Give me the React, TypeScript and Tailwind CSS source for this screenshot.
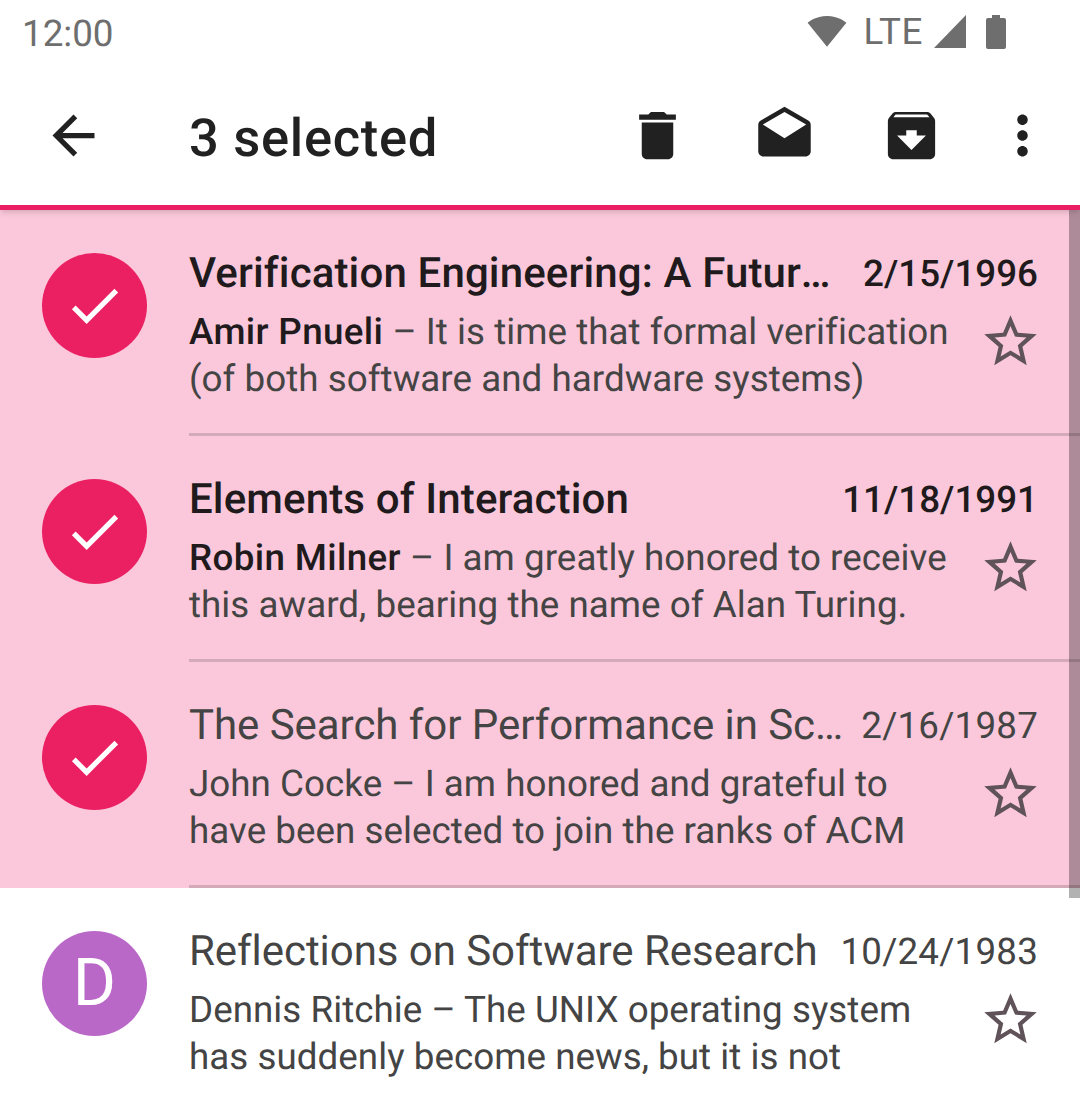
const rows = [
  {
    subject: "Verification Engineering: A Future Research Agenda",
    date: "2/15/1996",
    sender: "Amir Pnueli",
    snippet: "It is time that formal verification (of both software and hardware systems)",
    selected: true,
    unread: true,
  },
  {
    subject: "Elements of Interaction",
    date: "11/18/1991",
    sender: "Robin Milner",
    snippet: "I am greatly honored to receive this award, bearing the name of Alan Turing.",
    selected: true,
    unread: true,
  },
  {
    subject: "The Search for Performance in Scientific Computing",
    date: "2/16/1987",
    sender: "John Cocke",
    snippet: "I am honored and grateful to have been selected to join the ranks of ACM",
    selected: true,
    unread: false,
  },
  {
    subject: "Reflections on Software Research",
    date: "10/24/1983",
    sender: "Dennis Ritchie",
    snippet: "The UNIX operating system has suddenly become news, but it is not",
    selected: false,
    unread: false,
  },
];

function Icon({ d, className }: { d: string; className: string }) {
  return (
    <svg viewBox="0 0 24 24" className={className} fill="currentColor">
      <path d={d} />
    </svg>
  );
}

function StatusBar() {
  return (
    <div className="flex h-[63px] items-center justify-between pl-[22px] pr-[74px] text-[#6e6e6e]">
      <span className="mt-[5px] text-[36.75px] leading-none">12:00</span>
      <div className="flex items-center">
        <svg viewBox="0 0 24 24" className="-mt-[2px] h-[40px] w-[40px]" fill="currentColor">
          <path d="M12.01 21.49L23.64 7c-.45-.34-4.93-4-11.64-4C5.28 3 .81 6.66.36 7l11.64 14.5.01-.01z" />
        </svg>
        <span className="ml-[17px] mt-[1px] text-[36.75px] leading-none tracking-[0.6px]">LTE</span>
        <svg viewBox="0 0 32 33" className="ml-[11px] h-[33px] w-[32px]" fill="currentColor">
          <path d="M32 0V33H0z" />
        </svg>
        <svg viewBox="0 0 20 34" className="ml-[20px] h-[34px] w-[20px]" fill="currentColor">
          <path d="M6 0h8v3h4a2 2 0 0 1 2 2v27a2 2 0 0 1-2 2H2a2 2 0 0 1-2-2V5a2 2 0 0 1 2-2h4z" />
        </svg>
      </div>
    </div>
  );
}

function Toolbar() {
  return (
    <div className="relative z-10 flex h-[147px] items-center border-b-[5px] border-[#e91e63] bg-white text-[#212121] shadow-md">
      <Icon
        d="M20 11H7.83l5.59-5.59L12 4l-8 8 8 8 1.41-1.41L7.83 13H20v-2z"
        className="ml-[42px] mt-[3px] h-[63px] w-[63px]"
      />
      <span className="ml-[84px] mt-[8px] flex-1 text-[52.5px] font-medium leading-none tracking-[0.7px]">
        3 selected
      </span>
      <Icon
        d="M6 19c0 1.1.9 2 2 2h8c1.1 0 2-.9 2-2V7H6v12zM19 4h-3.5l-1-1h-5l-1 1H5v2h14V4z"
        className="mt-[3px] h-[63px] w-[63px]"
      />
      <Icon
        d="M21.99 8c0-.72-.37-1.35-.94-1.7L12 1 2.95 6.3C2.38 6.65 2 7.28 2 8v10c0 1.1.9 2 2 2h16c1.1 0 2-.9 2-2l-.01-10zM12 13L3.74 7.84 12 3l8.26 4.84L12 13z"
        className="ml-[64px] mt-[3px] h-[63px] w-[63px]"
      />
      <Icon
        d="M20.54 5.23l-1.39-1.68C18.88 3.21 18.47 3 18 3H6c-.47 0-.88.21-1.16.55L3.46 5.23C3.17 5.57 3 6.02 3 6.5V19c0 1.1.9 2 2 2h14c1.1 0 2-.9 2-2V6.5c0-.48-.17-.93-.46-1.27zM12 17.5L6.5 12H10v-2h4v2h3.5L12 17.5zM5.12 5l.81-1h12l.94 1H5.12z"
        className="ml-[64px] mt-[3px] h-[63px] w-[63px]"
      />
      <Icon
        d="M12 8c1.1 0 2-.9 2-2s-.9-2-2-2-2 .9-2 2 .9 2 2 2zm0 2c-1.1 0-2 .9-2 2s.9 2 2 2 2-.9 2-2-.9-2-2-2zm0 6c-1.1 0-2 .9-2 2s.9 2 2 2 2-.9 2-2-.9-2-2-2z"
        className="ml-[48px] mr-[26px] mt-[3px] h-[63px] w-[63px]"
      />
    </div>
  );
}

function Row({ row }: { row: (typeof rows)[number] }) {
  const strong = "font-medium text-[#201a1d]";
  return (
    <div className={`flex h-[226px] pl-[42px] ${row.selected ? "bg-[#fac8da]" : "bg-white"}`}>
      <div
        className={`mt-[43px] flex h-[105px] w-[105px] shrink-0 items-center justify-center rounded-full text-white ${
          row.selected ? "bg-[#ea2063]" : "bg-[#ba68c8]"
        }`}
      >
        {row.selected ? (
          <Icon d="M9 16.2L4.8 12l-1.4 1.4L9 19 21 7l-1.4-1.4L9 16.2z" className="h-[63px] w-[63px]" />
        ) : (
          <span className="text-[66px] leading-none">D</span>
        )}
      </div>
      <div className="ml-[42px] min-w-0 flex-1 border-b-[3px] border-black/15 pr-[42px] pt-[37px]">
        <div className="flex h-[52px] items-center gap-[18px]">
          <span
            className={`min-w-0 flex-1 truncate text-[42px] ${
              row.unread ? `${strong} tracking-[0.14px]` : "tracking-[-0.05px] text-[#444444]"
            }`}
          >
            {row.subject}
          </span>
          <span
            className={`mt-[1px] shrink-0 text-[36.75px] ${row.unread ? strong : "tracking-[0.2px] text-[#444444]"}`}
          >
            {row.date}
          </span>
        </div>
        <div className="mt-[9px] flex">
          <p className="w-[772px] text-[36.75px] leading-[47px] tracking-[0.04px] text-[#444444]">
            <span className={row.unread ? `${strong} tracking-[0.36px]` : ""}>{row.sender}</span> – {row.snippet}
          </p>
          <Icon
            d="M22 9.24l-7.19-.62L12 2 9.19 8.63 2 9.24l5.46 4.73L5.82 21 12 17.27 18.18 21l-1.63-7.03L22 9.24zM12 15.4l-3.76 2.27 1-4.28-3.32-2.88 4.38-.38L12 6.1l1.71 4.04 4.38.38-3.32 2.88 1 4.28L12 15.4z"
            className="-mr-[4px] ml-auto mt-[2px] h-[63px] w-[63px] shrink-0 text-[#5f5258]"
          />
        </div>
      </div>
    </div>
  );
}

export default function App() {
  return (
    <div className="relative h-[1110px] w-[1080px] overflow-hidden bg-white font-['Roboto',sans-serif] [text-rendering:geometricPrecision]">
      <StatusBar />
      <Toolbar />
      <div className="relative">
        {rows.map((row) => (
          <Row key={row.sender} row={row} />
        ))}
        {/* scrollbar */}
        <div className="absolute right-0 top-0 h-[688px] w-[11px] bg-black/30" />
      </div>
    </div>
  );
}
